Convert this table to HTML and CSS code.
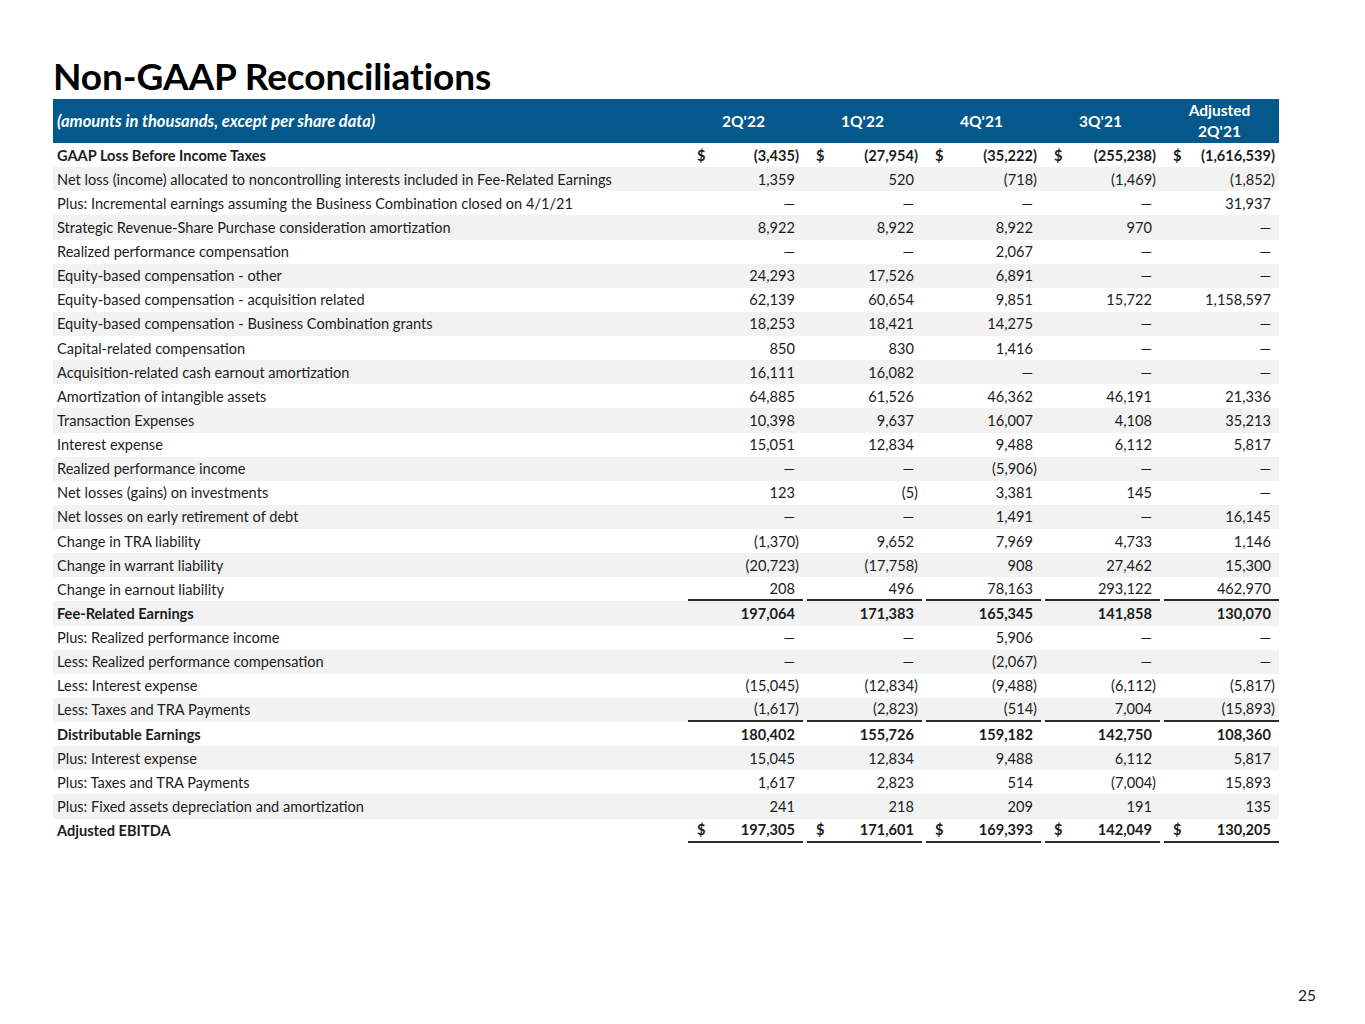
FILE: index.html
```html
<!DOCTYPE html>
<html>
<head>
<meta charset="utf-8">
<link rel="stylesheet" href="styles.css">
</head>
<body>
<div class="page">
  <h1 class="title">Non-GAAP Reconciliations</h1>
  <div class="table">
    <div class="head">
      <div class="hl">(amounts in thousands, except per share data)</div>
      <div class="hc">2Q'22</div>
      <div class="hc">1Q'22</div>
      <div class="hc">4Q'21</div>
      <div class="hc">3Q'21</div>
      <div class="hc">Adjusted<br>2Q'21</div>
    </div>
    <div class="body" id="body"></div>
  </div>
  <div class="pagenum">25</div>
</div>
<script src="app.js"></script>
</body>
</html>
```
FILE: app.js
```js
const D = '—';
const rows = [
  ['GAAP Loss Before Income Taxes', ['(3,435)','(27,954)','(35,222)','(255,238)','(1,616,539)'], 'bold dollar'],
  ['Net loss (income) allocated to noncontrolling interests included in Fee-Related Earnings', ['1,359','520','(718)','(1,469)','(1,852)']],
  ['Plus: Incremental earnings assuming the Business Combination closed on 4/1/21', [D,D,D,D,'31,937']],
  ['Strategic Revenue-Share Purchase consideration amortization', ['8,922','8,922','8,922','970',D]],
  ['Realized performance compensation', [D,D,'2,067',D,D]],
  ['Equity-based compensation - other', ['24,293','17,526','6,891',D,D]],
  ['Equity-based compensation - acquisition related', ['62,139','60,654','9,851','15,722','1,158,597']],
  ['Equity-based compensation - Business Combination grants', ['18,253','18,421','14,275',D,D]],
  ['Capital-related compensation', ['850','830','1,416',D,D]],
  ['Acquisition-related cash earnout amortization', ['16,111','16,082',D,D,D]],
  ['Amortization of intangible assets', ['64,885','61,526','46,362','46,191','21,336']],
  ['Transaction Expenses', ['10,398','9,637','16,007','4,108','35,213']],
  ['Interest expense', ['15,051','12,834','9,488','6,112','5,817']],
  ['Realized performance income', [D,D,'(5,906)',D,D]],
  ['Net losses (gains) on investments', ['123','(5)','3,381','145',D]],
  ['Net losses on early retirement of debt', [D,D,'1,491',D,'16,145']],
  ['Change in TRA liability', ['(1,370)','9,652','7,969','4,733','1,146']],
  ['Change in warrant liability', ['(20,723)','(17,758)','908','27,462','15,300']],
  ['Change in earnout liability', ['208','496','78,163','293,122','462,970'], 'ul'],
  ['Fee-Related Earnings', ['197,064','171,383','165,345','141,858','130,070'], 'bold'],
  ['Plus: Realized performance income', [D,D,'5,906',D,D]],
  ['Less: Realized performance compensation', [D,D,'(2,067)',D,D]],
  ['Less: Interest expense', ['(15,045)','(12,834)','(9,488)','(6,112)','(5,817)']],
  ['Less: Taxes and TRA Payments', ['(1,617)','(2,823)','(514)','7,004','(15,893)'], 'ul'],
  ['Distributable Earnings', ['180,402','155,726','159,182','142,750','108,360'], 'bold'],
  ['Plus: Interest expense', ['15,045','12,834','9,488','6,112','5,817']],
  ['Plus: Taxes and TRA Payments', ['1,617','2,823','514','(7,004)','15,893']],
  ['Plus: Fixed assets depreciation and amortization', ['241','218','209','191','135']],
  ['Adjusted EBITDA', ['197,305','171,601','169,393','142,049','130,205'], 'bold dollar ul']
];
const body = document.getElementById('body');
for (const [label, vals, cls] of rows) {
  const f = (cls || '').split(' ');
  const r = document.createElement('div');
  r.className = 'row' + (f.includes('bold') ? ' bold' : '');
  const l = document.createElement('div');
  l.className = 'lbl';
  l.textContent = label;
  r.appendChild(l);
  for (const v of vals) {
    const c = document.createElement('div');
    c.className = 'val' + (f.includes('ul') ? ' ul' : '') + (v.startsWith('(') ? ' neg' : '') + (v === D ? ' dash' : '');
    if (f.includes('dollar')) {
      const s = document.createElement('span');
      s.className = 'cur';
      s.textContent = '$';
      c.appendChild(s);
    }
    const n = document.createElement('span');
    n.className = 'num';
    n.textContent = v;
    c.appendChild(n);
    r.appendChild(c);
  }
  body.appendChild(r);
}
```
FILE: styles.css
```css
html, body {
  margin: 0;
  padding: 0;
  background: #ffffff;
}
.page {
  width: 1365px;
  height: 1024px;
  position: relative;
  font-family: Lato, "Liberation Sans", sans-serif;
  color: #1c1c1c;
}
.title {
  margin: 0;
  padding: 56px 0 0 53px;
  height: 43px;
  font-size: 37px;
  line-height: 40px;
  font-weight: 700;
  color: #000;
  letter-spacing: -0.1px;
}
.table {
  margin-left: 53px;
  width: 1226px;
}
.head {
  display: grid;
  grid-template-columns: 631px repeat(5, 1fr);
  height: 44px;
  background: #04588b;
  color: #fff;
  font-weight: 700;
  font-size: 15.5px;
}
.hl {
  display: flex;
  align-items: center;
  padding-left: 4px;
  font-style: italic;
  font-size: 16.5px;
}
.hc {
  display: flex;
  align-items: center;
  justify-content: center;
  text-align: center;
  line-height: 21px;
}
.row {
  display: grid;
  grid-template-columns: 631px repeat(5, 1fr);
  height: 24.14px;
  font-size: 14.6px;
}
.row:nth-child(even) {
  background: #f2f2f2;
}
.row.bold {
  font-weight: 700;
}
.lbl {
  display: flex;
  align-items: center;
  padding-left: 4px;
  white-space: nowrap;
}
.val {
  box-sizing: border-box;
  margin-left: 4px;
  display: flex;
  align-items: center;
  padding: 0 8px 0 9px;
}
.val.ul {
  border-bottom: 2px solid #2b2b2b;
}
.cur {
  flex: 0 0 auto;
}
.num {
  margin-left: auto;
}
.val.neg .num {
  margin-right: -4px;
}
.pagenum {
  position: absolute;
  left: 1298px;
  top: 986px;
  font-size: 15.5px;
  color: #1c1c1c;
}
```
